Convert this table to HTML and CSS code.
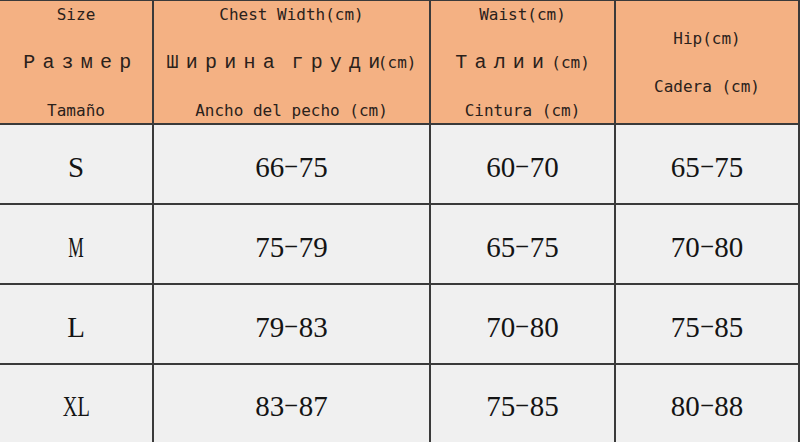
FILE: index.html
```html
<!DOCTYPE html>
<html lang="en">
<head>
<meta charset="utf-8">
<title>Size chart</title>
<link rel="stylesheet" href="styles.css">
</head>
<body>
<div class="chart">
  <div class="head">
    <span class="ln">Size</span>
    <span class="ln"><span class="cy">Р а з м е р</span></span>
    <span class="ln">Tamaño</span>
  </div>
  <div class="head">
    <span class="ln">Chest Width(cm)</span>
    <span class="ln"><span class="cy">Ш и р и н а  г р у д и</span>(cm)</span>
    <span class="ln">Ancho del pecho (cm)</span>
  </div>
  <div class="head">
    <span class="ln">Waist(cm)</span>
    <span class="ln"><span class="cy">Т а л и и </span>(cm)</span>
    <span class="ln">Cintura (cm)</span>
  </div>
  <div class="head">
    <span class="ln">Hip(cm)</span>
    <span class="ln">Cadera (cm)</span>
  </div>

  <div class="cell"><span class="sz">S</span></div>
  <div class="cell">66<span class="dash">–</span>75</div>
  <div class="cell">60<span class="dash">–</span>70</div>
  <div class="cell">65<span class="dash">–</span>75</div>

  <div class="cell"><span class="sz sz-m">M</span></div>
  <div class="cell">75<span class="dash">–</span>79</div>
  <div class="cell">65<span class="dash">–</span>75</div>
  <div class="cell">70<span class="dash">–</span>80</div>

  <div class="cell"><span class="sz">L</span></div>
  <div class="cell">79<span class="dash">–</span>83</div>
  <div class="cell">70<span class="dash">–</span>80</div>
  <div class="cell">75<span class="dash">–</span>85</div>

  <div class="cell"><span class="sz sz-xl">XL</span></div>
  <div class="cell">83<span class="dash">–</span>87</div>
  <div class="cell">75<span class="dash">–</span>85</div>
  <div class="cell">80<span class="dash">–</span>88</div>
</div>
</body>
</html>
```

FILE: styles.css
```css
html, body {
  margin: 0;
  padding: 0;
  background: #f0f0f0;
}

.chart {
  width: 800px;
  height: 442px;
  box-sizing: border-box;
  display: grid;
  grid-template-columns: 152px 275px 183px 182px;
  grid-template-rows: 122px 78px 78px 78px 77px;
  column-gap: 2px;
  row-gap: 2px;
  padding: 1px 2px 0 0;
  background: #3a3a3a;
  overflow: hidden;
}

.head {
  background: #f4b183;
  display: flex;
  flex-direction: column;
  align-items: center;
  justify-content: center;
  gap: 28px;
  padding-top: 2px;
  font-family: "DejaVu Sans Mono", "Liberation Mono", monospace;
  font-size: 16px;
  color: #2a211b;
  overflow: hidden;
}

.ln {
  display: block;
  line-height: 20px;
  white-space: pre;
}

.cy {
  font-family: "Liberation Mono", "DejaVu Sans Mono", monospace;
  font-size: 20px;
  letter-spacing: -2.4px;
}

.cell {
  background: #f0f0f0;
  display: flex;
  align-items: center;
  justify-content: center;
  padding-top: 5px;
  box-sizing: border-box;
  font-family: "Liberation Serif", "DejaVu Serif", serif;
  font-size: 29px;
  color: #141414;
  line-height: 34px;
}

.dash {
  display: inline-block;
  transform: translateY(-3px) scaleX(0.78);
}

.sz {
  display: inline-block;
}

.sz-m {
  transform: scaleX(0.6);
}

.sz-xl {
  transform: scaleX(0.7);
}
```
